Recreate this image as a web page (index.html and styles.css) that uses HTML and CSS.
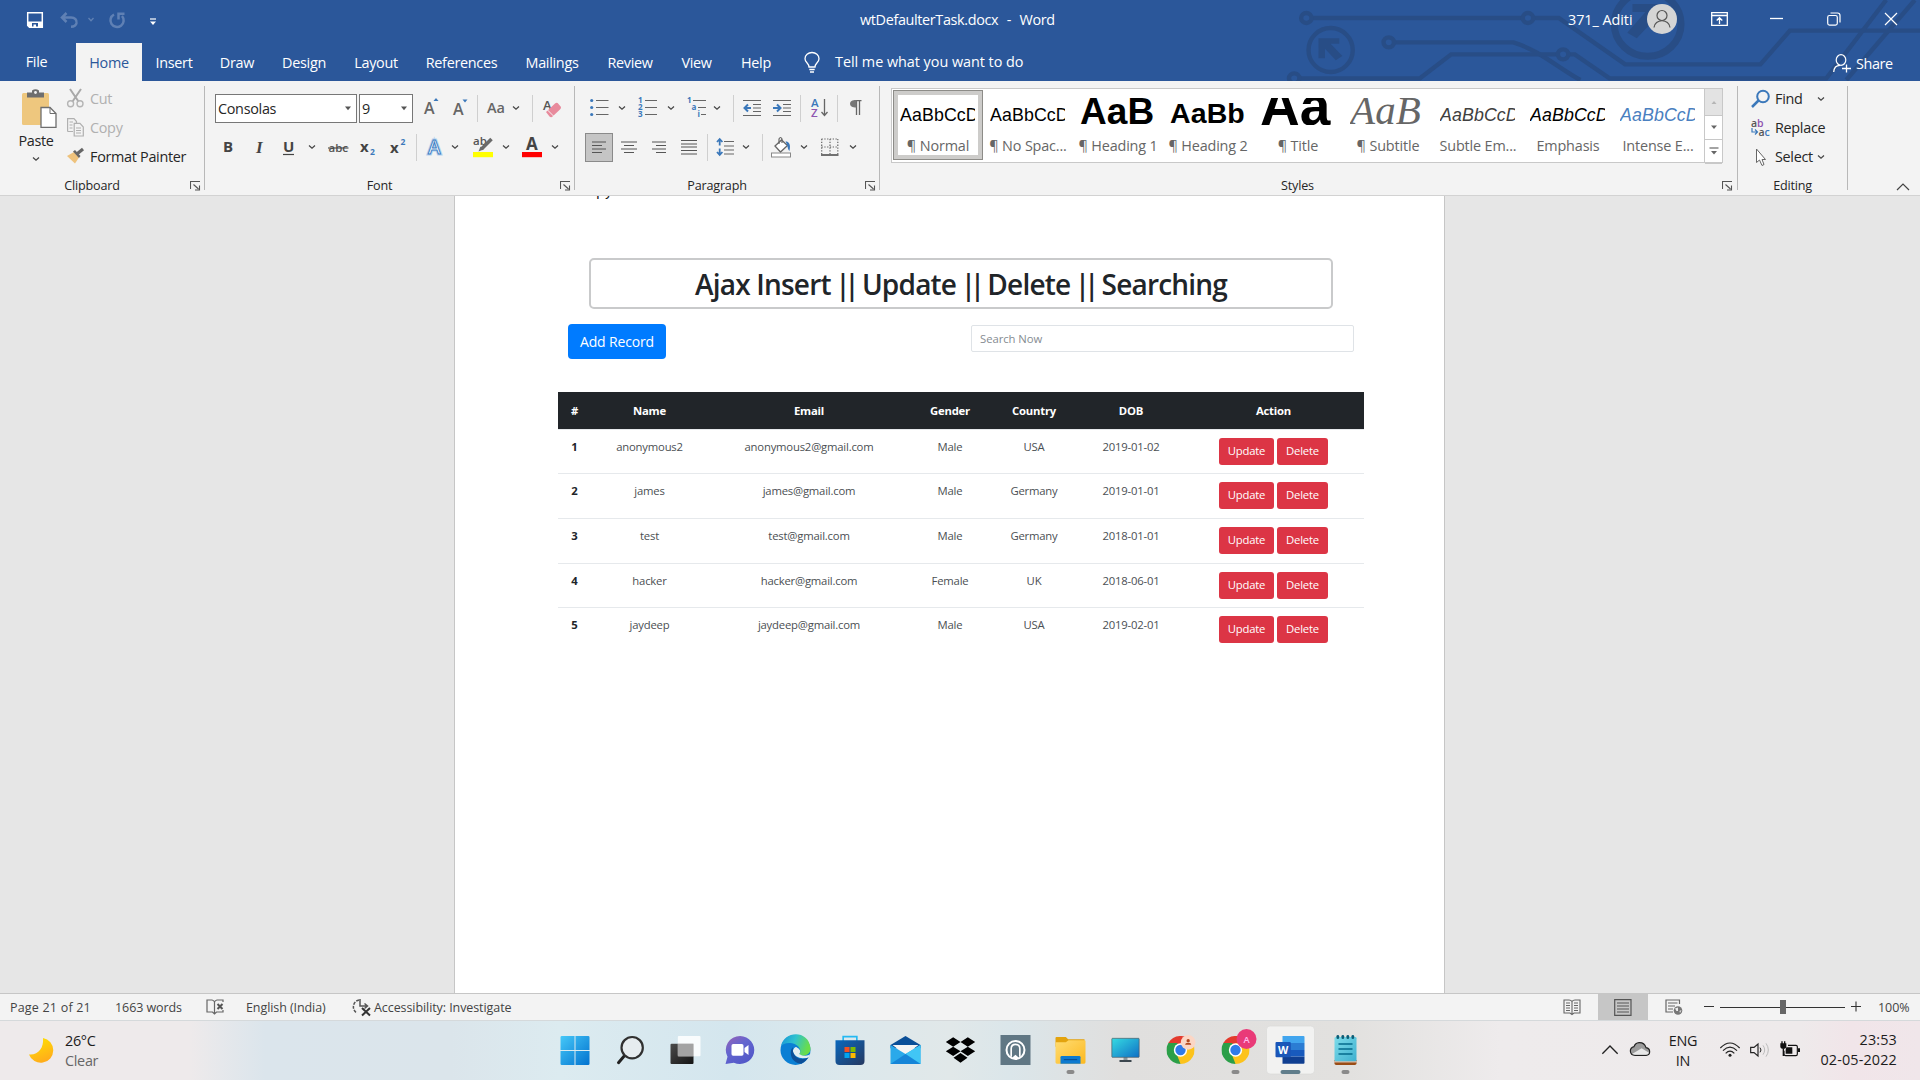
FILE: index.html
```html
<!DOCTYPE html>
<html lang="en">
<head>
<meta charset="utf-8">
<title>wtDefaulterTask.docx - Word</title>
<link rel="stylesheet" href="styles.css">
</head>
<body>
<svg class="defs" width="0" height="0">
  <symbol id="chev" viewBox="0 0 10 6"><path d="M2 1.5L5 4.3L8 1.5" fill="none" stroke="#444" stroke-width="1.2"/></symbol>
  <symbol id="launch" viewBox="0 0 11 10"><path d="M.5 8V.5H10M3.5 3.5L8.5 8M9.5 4.5V9H5" fill="none" stroke="#555" stroke-width="1.1"/></symbol>
  <linearGradient id="win" x1="0" y1="0" x2="1" y2="1"><stop offset="0" stop-color="#45c8f8"/><stop offset="1" stop-color="#0272cf"/></linearGradient>
  <linearGradient id="chat" x1="0" y1="0" x2=".7" y2="1"><stop offset="0" stop-color="#9b62b5"/><stop offset=".45" stop-color="#6465cf"/><stop offset="1" stop-color="#5157c8"/></linearGradient>
  <linearGradient id="edge1" x1="0" y1="0" x2="1" y2=".3"><stop offset="0" stop-color="#1793d8"/><stop offset=".5" stop-color="#2fc2cf"/><stop offset="1" stop-color="#69dd4b"/></linearGradient>
  <linearGradient id="store" x1="0" y1="0" x2="1" y2="1"><stop offset="0" stop-color="#0a68bd"/><stop offset="1" stop-color="#263860"/></linearGradient>
  <linearGradient id="fold" x1="0" y1="0" x2="1" y2="1"><stop offset="0" stop-color="#ffdc72"/><stop offset="1" stop-color="#fcb920"/></linearGradient>
  <linearGradient id="mon" x1="0" y1="0" x2="1" y2="1"><stop offset="0" stop-color="#35dbe2"/><stop offset="1" stop-color="#0f6fc5"/></linearGradient>
  <linearGradient id="moon" x1="0" y1="0" x2=".4" y2="1"><stop offset="0" stop-color="#ffe600"/><stop offset="1" stop-color="#ffae1a"/></linearGradient>
  <linearGradient id="dark" x1="0" y1="0" x2="1" y2="1"><stop offset="0" stop-color="#4b4b4b"/><stop offset="1" stop-color="#141414"/></linearGradient>
  <linearGradient id="note" x1="0" y1="0" x2="1" y2="1"><stop offset="0" stop-color="#7ddcea"/><stop offset="1" stop-color="#3fb0cf"/></linearGradient>
  <symbol id="chrome" viewBox="-42 -42 84 84">
    <path d="M0 0L-36.400-21A42 42 0 0 1 36.400-21Z" fill="#e33b2e"/>
    <path d="M0 0L36.400-21A42 42 0 0 1 0 42Z" fill="#fcc31c"/>
    <path d="M0 0L0 42A42 42 0 0 1-36.400-21Z" fill="#2b9f48"/>
    <path d="M0-20H37L20 8Z" fill="#fcc31c"/><path d="M-17.300 10L-36.400-21L-8-24Z" fill="#2b9f48"/><path d="M-36.400-21H37L0-42Z" fill="#e33b2e"/><path d="M17 10L0 42L-10 16Z" fill="#fcc31c"/>
    <circle r="20" fill="#fff"/><circle r="15.500" fill="#2f7bea"/>
  </symbol>
</svg>

<header class="titlebar">
  <svg class="circuit" viewBox="0 0 1568 243" preserveAspectRatio="none">
    <g fill="none" stroke="#284d86" stroke-width="4.400">
      <path d="M166 54H650M678 54H735L888 193H1200L1268 92H1568"/>
      <path d="M356 127H630C690 150 740 210 785 240"/>
      <path d="M138 235H415L487 163H733M758 163H772L852 235H1352L1490 0"/>
      <path d="M1398 240L1556 0"/>
      <ellipse cx="153" cy="54" rx="12" ry="15"/><ellipse cx="664" cy="54" rx="12" ry="15"/><ellipse cx="343" cy="127" rx="12" ry="15"/><ellipse cx="745" cy="163" rx="12" ry="15"/><ellipse cx="125" cy="235" rx="12" ry="15"/>
      <ellipse cx="209" cy="150" rx="51" ry="66"/>
      <ellipse cx="940" cy="72" rx="77" ry="97" stroke-width="7"/>
    </g>
    <path d="M181 115H229V131H209L236 168L221 181L196 146V175H181ZM905 12H975V70L953 62L915 115L893 98L935 36H905Z" fill="#284d86"/>
  </svg>
  <div class="title-row">
    <div class="quick">
      <svg width="16" height="16" viewBox="0 0 16 16"><path d="M.7.7H15.300V15.300H2.500L.7 13.500Z" fill="none" stroke="#fff" stroke-width="1.500"/><path d="M1 9.500H15V15H11V11H5V15H2L1 14Z" fill="#fff"/><path d="M6.500 12.500H9V15H6.500Z" fill="#fff"/></svg>
      <svg width="18" height="16" viewBox="0 0 18 16"><path d="M6.500 1L2 5.500L6.500 10M2 5.500H11C15 5.500 17 8 16.500 11C16 13.500 13.500 14.800 11 14.800" fill="none" stroke="#5f80b4" stroke-width="2.500"/></svg>
      <svg width="8" height="6" viewBox="0 0 8 6"><path d="M1.500 1L4 3.800L6.500 1" fill="none" stroke="#5f80b4" stroke-width="1.300"/></svg>
      <svg width="18" height="17" viewBox="0 0 18 17"><path d="M6 2.500A6.600 6.600 0 1 0 14 4M10.500 7.500V1.800H16.500" fill="none" stroke="#5f80b4" stroke-width="2.500"/></svg>
      <svg width="8" height="8" viewBox="0 0 8 8"><path d="M1 1H7" stroke="#fff" stroke-width="1.200"/><path d="M1 3.500H7L4 7Z" fill="#fff"/></svg>
    </div>
    <div class="doc-title"><span>wtDefaulterTask.docx</span><span>-</span><span>Word</span></div>
    <div class="account">
      <span class="user">371_ Aditi</span>
      <svg width="30" height="30" viewBox="0 0 30 30"><circle cx="15" cy="15" r="15" fill="#d5d5d5"/><circle cx="15" cy="11.500" r="5" fill="none" stroke="#555" stroke-width="1.200"/><path d="M7 23.500C7.500 14.500 22.500 14.500 23 23.500" fill="none" stroke="#555" stroke-width="1.200"/></svg>
      <svg width="17" height="14" viewBox="0 0 17 14"><path d="M.7.7H16.300V13.300H.7ZM.7 3.500H16.300M8.500 12V6M5.700 8.500L8.500 5.700L11.300 8.500" fill="none" stroke="#fff" stroke-width="1.300"/></svg>
      <svg width="14" height="14" viewBox="0 0 14 14"><path d="M0 6.500H13" stroke="#fff" stroke-width="1.300"/></svg>
      <svg width="14" height="14" viewBox="0 0 14 14"><rect x=".7" y="3.500" width="9.600" height="9.600" rx="1.800" fill="none" stroke="#fff" stroke-width="1.200"/><path d="M3.500 1H10.500Q13 1 13 3.500V10.500" fill="none" stroke="#fff" stroke-width="1.200"/></svg>
      <svg width="14" height="14" viewBox="0 0 14 14"><path d="M1 1L13 13M13 1L1 13" stroke="#fff" stroke-width="1.200"/></svg>
    </div>
  </div>
  <nav class="tabs">
    <span class="file">File</span><span class="active">Home</span><span>Insert</span><span>Draw</span><span>Design</span><span>Layout</span><span>References</span><span>Mailings</span><span>Review</span><span>View</span><span>Help</span>
    <div class="tell"><svg width="16" height="21" viewBox="0 0 16 21"><path d="M5 15C5 11 1 10.500 1 6.800A7 6.300 0 0 1 15 6.800C15 10.500 11 11 11 15ZM5.300 17.500H10.700M6 20H10" fill="none" stroke="#fff" stroke-width="1.300"/></svg><span>Tell me what you want to do</span></div>
    <div class="share"><svg width="18" height="19" viewBox="0 0 18 19"><ellipse cx="8" cy="6" rx="4.800" ry="5.300" fill="none" stroke="#fff" stroke-width="1.200"/><path d="M.7 18C1 13 4 11.300 7 11.300M13.500 10.500V18.500M9 14.500H18" fill="none" stroke="#fff" stroke-width="1.300"/></svg><span>Share</span></div>
  </nav>
</header>

<section class="ribbon">
  <div class="group clipboard">
    <div class="clip-body">
      <div class="paste">
        <svg width="36" height="39" viewBox="0 0 36 39"><rect x="1" y="4" width="27" height="32" rx="1.500" fill="#eec77e"/><path d="M6 8.500V3.500H11V1.500Q14.500-1 18 1.500V3.500H23V8.500Z" fill="#6e6e6e"/><circle cx="14.500" cy="3.500" r="1.400" fill="#f3f3f3"/><path d="M20 18.500H29L35 24.500V38.300H20Z" fill="#fff" stroke="#6e6e6e" stroke-width="1.300"/><path d="M29 18.500V24.500H35" fill="none" stroke="#6e6e6e"/></svg>
        <span>Paste</span>
        <svg class="chev" width="10" height="6"><use href="#chev"/></svg>
      </div>
      <div class="clip-list">
        <div class="off"><svg width="17" height="19" viewBox="0 0 17 19"><path d="M3 0L11.500 12.500M14 0L5.500 12.500" stroke="#a9a9a9" stroke-width="2"/><circle cx="3.600" cy="14.800" r="3" fill="none" stroke="#b5b5b5" stroke-width="1.400"/><circle cx="13" cy="14.800" r="3" fill="none" stroke="#b5b5b5" stroke-width="1.400"/></svg>Cut</div>
        <div class="off"><svg width="17" height="19" viewBox="0 0 17 19"><path d="M.6 13.500V.7H7L9.500 3.500V5M.6 13.500H6M7.200 5.300H13L16.300 9V18H7.200ZM2.500 4H6M2.500 7H5.500M2.500 10H5.500M9 10H14M9 12.500H14M9 15H14" fill="none" stroke="#b0b0b0" stroke-width="1.200"/></svg>Copy</div>
        <div><svg width="17" height="19" viewBox="0 0 17 19"><path d="M0 9L7 5L12 10.500L8 16.500Z" fill="#eec27c"/><path d="M6 4.500L8 3L13.500 9L12 11Z" fill="#666"/><path d="M10.500 6.500L16 2" stroke="#666" stroke-width="3.200"/></svg>Format Painter</div>
      </div>
    </div>
    <div class="label"><span>Clipboard</span><svg width="11" height="10"><use href="#launch"/></svg></div>
  </div>

  <div class="group font">
    <div class="row font-1">
      <div class="combo">Consolas<svg width="8" height="5" viewBox="0 0 8 5"><path d="M1 .5H7L4 4.300Z" fill="#555"/></svg></div>
      <div class="combo size">9<svg width="8" height="5" viewBox="0 0 8 5"><path d="M1 .5H7L4 4.300Z" fill="#555"/></svg></div>
      <svg width="16" height="20" viewBox="0 0 16 20"><text x="0" y="16" class="ic-a">A</text><path d="M9.500 3L12 0L14.500 3Z" fill="#3b78ba"/></svg>
      <svg width="16" height="20" viewBox="0 0 16 20"><text x="0" y="17" class="ic-a">A</text><path d="M9.500 1.500L12 4.500L14.500 1.500Z" fill="#3b78ba"/></svg>
      <i class="sep"></i>
      <svg width="20" height="20" viewBox="0 0 20 20"><text x="0" y="15" class="ic-aa">Aa</text></svg>
      <svg width="10" height="6"><use href="#chev"/></svg>
      <i class="sep"></i>
      <svg width="20" height="20" viewBox="0 0 20 20"><text x="0" y="11.500" class="ic-sm">A</text><path d="M3 14L12 5.500Q14 4 15.500 6L18 9Q18 10.500 17 11.500L9 19Q7.500 19.500 6.500 18.500Z" fill="#e88a9c"/><path d="M4.500 12L10.500 18" stroke="#f3f3f3" stroke-width="1"/></svg>
    </div>
    <div class="row font-2">
      <svg width="16" height="20" viewBox="0 0 16 20"><text x="3" y="15" class="ic-b">B</text></svg>
      <svg width="16" height="20" viewBox="0 0 16 20"><text x="4" y="15.500" class="ic-i">I</text></svg>
      <svg width="16" height="20" viewBox="0 0 16 20"><text x="1" y="14.500" class="ic-b">U</text><path d="M1 17.500H12" stroke="#444" stroke-width="1.200"/></svg>
      <svg width="10" height="6"><use href="#chev"/></svg>
      <svg width="23" height="20" viewBox="0 0 23 20"><text x="1.500" y="15" class="ic-abc">abc</text><path d="M1 11H21.500" stroke="#444" stroke-width="1.100"/></svg>
      <svg width="18" height="20" viewBox="0 0 18 20"><text x="0" y="15" class="ic-b">x</text><text x="10" y="18" class="ic-n">2</text></svg>
      <svg width="18" height="20" viewBox="0 0 18 20"><text x="1" y="15.500" class="ic-b">x</text><text x="11.500" y="8" class="ic-n">2</text></svg>
      <i class="sep"></i>
      <svg width="18" height="22" viewBox="0 0 18 22"><text x="2" y="18" class="ic-fx glow">A</text><text x="2" y="18" class="ic-fx">A</text></svg>
      <svg width="10" height="6"><use href="#chev"/></svg>
      <svg width="22" height="22" viewBox="0 0 22 22"><text x="1" y="8.500" class="ic-hl">ab</text><path d="M19.500 3L9.500 13" stroke="#6a6a6a" stroke-width="3.500"/><path d="M6.500 15.500L8.500 10.500L11.500 13.500Z" fill="#6a6a6a"/><rect x="1" y="16" width="20" height="5.200" fill="#ff0"/></svg>
      <svg width="10" height="6"><use href="#chev"/></svg>
      <svg width="22" height="22" viewBox="0 0 22 22"><text x="5" y="14" class="ic-fc">A</text><rect x="1" y="16" width="20" height="5.200" fill="#f00"/></svg>
      <svg width="10" height="6"><use href="#chev"/></svg>
    </div>
    <div class="label"><span>Font</span><svg width="11" height="10"><use href="#launch"/></svg></div>
  </div>

  <div class="group para">
    <div class="row para-1">
      <svg width="19" height="20" viewBox="0 0 19 20"><path d="M6 2.500H18.500M6 9.500H18.500M6 16.500H18.500" stroke="#666" stroke-width="1.200"/><g fill="#3b78ba"><circle cx="1.700" cy="2.500" r="1.600"/><circle cx="1.700" cy="9.500" r="1.600"/><circle cx="1.700" cy="16.500" r="1.600"/></g></svg>
      <svg width="10" height="6"><use href="#chev"/></svg>
      <svg width="20" height="20" viewBox="0 0 20 20"><path d="M7 2.500H19M7 9.500H19M7 16.500H19" stroke="#666" stroke-width="1.200"/><g class="ic-num"><text x="0" y="5">1</text><text x="0" y="12">2</text><text x="0" y="19">3</text></g></svg>
      <svg width="10" height="6"><use href="#chev"/></svg>
      <svg width="21" height="20" viewBox="0 0 21 20"><path d="M7 2.500H20M12 9.500H20M15 16.500H20" stroke="#666" stroke-width="1.200"/><g class="ic-num"><text x="1" y="5">1</text><text x="5.500" y="12">a</text><text x="11.500" y="19">i</text></g></svg>
      <svg width="10" height="6"><use href="#chev"/></svg>
      <i class="sep"></i>
      <svg width="19" height="20" viewBox="0 0 19 20"><path d="M0 2.500H18M10 6.500H18M10 10H18M10 13.500H18M0 17.500H18" stroke="#666" stroke-width="1.200"/><path d="M8 10H2M5 6.500L1.500 10L5 13.500" fill="none" stroke="#3b78ba" stroke-width="2"/></svg>
      <svg width="19" height="20" viewBox="0 0 19 20"><path d="M0 2.500H18M10 6.500H18M10 10H18M10 13.500H18M0 17.500H18" stroke="#666" stroke-width="1.200"/><path d="M0 10H6.500M4 6.500L7.500 10L4 13.500" fill="none" stroke="#3b78ba" stroke-width="2"/></svg>
      <i class="sep"></i>
      <svg width="20" height="20" viewBox="0 0 20 20"><text x="1" y="9" class="ic-az">A</text><text x="1" y="19" class="ic-az z">Z</text><path d="M14.500 1V17M11.500 14L14.500 17.500L17.500 14" fill="none" stroke="#666" stroke-width="1.300"/></svg>
      <i class="sep"></i>
      <svg width="14" height="20" viewBox="0 0 14 20"><path d="M12.500 2.700H5.500M7.500 2.500V17M10.500 2.500V17" stroke="#666" stroke-width="1.300"/><path d="M7.500 2V9.500C3 9.500 1 8 1 5.700C1 3.500 3 2 7.500 2Z" fill="#777"/></svg>
    </div>
    <div class="row para-2">
      <div class="pressed"><svg width="16" height="16" viewBox="0 0 16 16"><path d="M1 3H15M1 6.500H11M1 10H15M1 13.500H11" stroke="#555" stroke-width="1.200"/></svg></div>
      <svg width="16" height="16" viewBox="0 0 16 16"><path d="M0 3H16M3 6.500H13M0 10H16M3 13.500H13" stroke="#555" stroke-width="1.200"/></svg>
      <svg width="16" height="16" viewBox="0 0 16 16"><path d="M1 3H15M5 6.500H15M1 10H15M5 13.500H15" stroke="#555" stroke-width="1.200"/></svg>
      <svg width="16" height="16" viewBox="0 0 16 16"><path d="M0 1.500H16M0 5H16M0 8H16M0 11.500H16M0 15H16" stroke="#555" stroke-width="1.200"/></svg>
      <i class="sep"></i>
      <svg width="19" height="20" viewBox="0 0 19 20"><path d="M8 4.500H18M8 9H18M8 13H18M8 17H18" stroke="#666" stroke-width="1.200"/><path d="M3.700 2V8.500M1 5L3.700 2L6.400 5M3.700 11.500V18M1 15L3.700 18L6.400 15" fill="none" stroke="#3b78ba" stroke-width="1.800"/></svg>
      <svg width="10" height="6"><use href="#chev"/></svg>
      <i class="sep"></i>
      <svg width="22" height="22" viewBox="0 0 22 22"><path d="M5 10L11.500 4L17.500 9.500L10.500 16Z" fill="#fff" stroke="#666" stroke-width="1.300"/><path d="M9 8V3Q10.500 0 12 3V7" fill="none" stroke="#666" stroke-width="1.200"/><path d="M15.500 5.500C19 5.500 21 8 19.500 15C17.500 13.500 18 9.500 15.500 5.500Z" fill="#3b78ba"/><rect x="1.500" y="17" width="19" height="4" fill="#fff" stroke="#888"/></svg>
      <svg width="10" height="6"><use href="#chev"/></svg>
      <svg width="18" height="18" viewBox="0 0 18 18"><path d="M.5 1H17M.5 9H17M.7 1V16M9 1V16M16.800 1V16" fill="none" stroke="#666" stroke-width="1.200" stroke-dasharray="1.300 1.500"/><path d="M0 17H17.500" stroke="#444" stroke-width="1.500"/></svg>
      <svg width="10" height="6"><use href="#chev"/></svg>
    </div>
    <div class="label"><span>Paragraph</span><svg width="11" height="10"><use href="#launch"/></svg></div>
  </div>

  <div class="group styles">
    <div class="gallery">
      <div class="style on"><div class="pv">AaBbCcDd</div><div class="nm">¶ Normal</div></div>
      <div class="style"><div class="pv">AaBbCcDd</div><div class="nm">¶ No Spac...</div></div>
      <div class="style"><div class="pv h1">AaB</div><div class="nm">¶ Heading 1</div></div>
      <div class="style"><div class="pv h2">AaBb</div><div class="nm">¶ Heading 2</div></div>
      <div class="style"><div class="pv ti">Aa</div><div class="nm">¶ Title</div></div>
      <div class="style"><div class="pv su">AaB</div><div class="nm">¶ Subtitle</div></div>
      <div class="style"><div class="pv em subtle">AaBbCcDd</div><div class="nm">Subtle Em...</div></div>
      <div class="style"><div class="pv em">AaBbCcDd</div><div class="nm">Emphasis</div></div>
      <div class="style"><div class="pv em intense">AaBbCcDd</div><div class="nm">Intense E...</div></div>
      <div class="scroller">
        <span class="dim"><svg width="8" height="5" viewBox="0 0 8 5"><path d="M1.500 4H6.500L4 1Z" fill="#b5b5b5"/></svg></span>
        <span><svg width="8" height="5" viewBox="0 0 8 5"><path d="M1 .5H7L4 4Z" fill="#666"/></svg></span>
        <span><svg width="10" height="9" viewBox="0 0 10 9"><path d="M.5 1H9.500" stroke="#666" stroke-width="1.200"/><path d="M2 4H8L5 7.500Z" fill="#666"/></svg></span>
      </div>
    </div>
    <div class="label"><span>Styles</span><svg width="11" height="10"><use href="#launch"/></svg></div>
  </div>

  <div class="group editing">
    <div class="edit-list">
      <div><svg width="20" height="20" viewBox="0 0 20 20"><circle cx="12" cy="7.500" r="5.800" fill="none" stroke="#3b78ba" stroke-width="2"/><path d="M7.500 11.500L1 18" stroke="#3b78ba" stroke-width="2.500"/></svg>Find<svg class="c1" width="10" height="6"><use href="#chev"/></svg></div>
      <div><svg width="20" height="20" viewBox="0 0 20 20"><text x="0" y="8.500" class="ic-rep">a<tspan fill="#8e55b0">b</tspan></text><text x="7.500" y="18" class="ic-rep">a<tspan fill="#3b78ba">c</tspan></text><path d="M1 10V14H6M4 11.500L6.500 14L4 16.500" fill="none" stroke="#3b78ba" stroke-width="1.200"/></svg>Replace</div>
      <div><svg width="20" height="20" viewBox="0 0 20 20"><path d="M5.500 2V15.500L8.500 13L11 18.500L13 17.500L11 12.500H14.500Z" fill="#fff" stroke="#666"/></svg>Select<svg class="c2" width="10" height="6"><use href="#chev"/></svg></div>
    </div>
    <div class="label"><span>Editing</span></div>
  </div>
  <div class="collapse"><svg width="14" height="8" viewBox="0 0 14 8"><path d="M1 7L7 1L13 7" fill="none" stroke="#444" stroke-width="1.200"/></svg></div>
</section>

<main class="canvas">
  <article class="page">
    <div class="cut-line">py</div>
    <h1 class="app-title">Ajax Insert <i>||</i> Update <i>||</i> Delete <i>||</i> Searching</h1>
    <div class="tools"><span class="add">Add Record</span><span class="search">Search Now</span></div>
    <table class="records">
      <colgroup><col class="k1"><col class="k2"><col class="k3"><col class="k4"><col class="k5"><col class="k6"><col class="k7"></colgroup>
      <thead><tr><th>#</th><th>Name</th><th>Email</th><th>Gender</th><th>Country</th><th>DOB</th><th>Action</th></tr></thead>
      <tbody>
        <tr><th>1</th><td>anonymous2</td><td>anonymous2@gmail.com</td><td>Male</td><td>USA</td><td>2019-01-02</td><td><div class="acts"><span>Update</span><span>Delete</span></div></td></tr>
        <tr><th>2</th><td>james</td><td>james@gmail.com</td><td>Male</td><td>Germany</td><td>2019-01-01</td><td><div class="acts"><span>Update</span><span>Delete</span></div></td></tr>
        <tr><th>3</th><td>test</td><td>test@gmail.com</td><td>Male</td><td>Germany</td><td>2018-01-01</td><td><div class="acts"><span>Update</span><span>Delete</span></div></td></tr>
        <tr><th>4</th><td>hacker</td><td>hacker@gmail.com</td><td>Female</td><td>UK</td><td>2018-06-01</td><td><div class="acts"><span>Update</span><span>Delete</span></div></td></tr>
        <tr><th>5</th><td>jaydeep</td><td>jaydeep@gmail.com</td><td>Male</td><td>USA</td><td>2019-02-01</td><td><div class="acts"><span>Update</span><span>Delete</span></div></td></tr>
      </tbody>
    </table>
  </article>
</main>

<footer class="status">
  <div class="st-left">
    <span class="pages">Page 21 of 21</span><span>1663 words</span>
    <svg width="18" height="16" viewBox="0 0 18 16"><path d="M8.500 3Q8 1.500 6 1H1V13H6.500L8.500 15L10.500 13H17V11M8.500 3V14M8.500 3Q9 1.500 11 1H17V3" fill="none" stroke="#666" stroke-width="1.200"/><path d="M11.500 5L16.500 10M16.500 5L11.500 10" stroke="#555" stroke-width="2"/></svg>
    <span>English (India)</span>
    <svg width="20" height="19" viewBox="0 0 20 19"><path d="M7 2A7 7 0 0 0 5 15" fill="none" stroke="#555" stroke-width="1.500" stroke-dasharray="3 1.200"/><path d="M8 1V8H15M12.500 5.500L15.500 8L12.500 10.500" fill="none" stroke="#555" stroke-width="1.500"/><path d="M10 10L18 17.500M18 10L10 17.500" stroke="#333" stroke-width="2"/></svg>
    <span>Accessibility: Investigate</span>
  </div>
  <div class="st-right">
    <svg width="18" height="16" viewBox="0 0 18 16"><path d="M9 2.500Q8 1 6 1H1V14H7L9 15.500L11 14H17V1H12Q10 1 9 2.500V15M3 4H7M3 6.500H7M3 9H7M3 11.500H7M11 4H15M11 6.500H15M11 9H15M11 11.500H15" fill="none" stroke="#666" stroke-width="1.100"/></svg>
    <div class="view-on"><svg width="18" height="17" viewBox="0 0 18 17"><path d="M.7.700H17V16.300H.7ZM3 4H15M3 7H15M3 10H15M3 13H15" fill="none" stroke="#555" stroke-width="1.200"/></svg></div>
    <svg width="18" height="17" viewBox="0 0 18 17"><path d="M14.500 5V1H1V13H8M3 4H12.500M3 7H10M3 10H8" fill="none" stroke="#666" stroke-width="1.200"/><circle cx="13" cy="11.500" r="4.300" fill="#777"/><path d="M10 9.500L13 8.500L13 12L11.500 12ZM14.500 12L16.500 11L15 14Z" fill="#eee"/></svg>
    <svg class="zoom" width="158" height="16" viewBox="0 0 158 16"><path d="M0 7.500H10M147 7.500H157M152 2.500V12.500" stroke="#333" stroke-width="1.100"/><path d="M16 8.500H141" stroke="#333" stroke-width="1.100"/><rect x="76" y="1" width="6" height="14" fill="#666"/></svg>
    <span>100%</span>
  </div>
</footer>

<footer class="taskbar">
  <div class="weather">
    <svg width="26" height="26" viewBox="0 0 26 26"><path d="M16 1A12.500 12.500 0 1 1 2 17.500C11 18.500 17 11 16 1Z" fill="url(#moon)"/></svg>
    <div><b>26°C</b><span>Clear</span></div>
  </div>
  <div class="apps">
    <svg viewBox="25.5 30 165 180"><path d="M67 78H105V120H63V82Q63 78 67 78ZM108 78H146Q150 78 150 82V120H108ZM63 123H105V165H67Q63 165 63 161ZM108 123H150V161Q150 165 146 165H108Z" fill="url(#win)"/></svg>
    <svg viewBox="190.5 30 165 180"><path d="M256 136L237 158" stroke="#222" stroke-width="9" stroke-linecap="round"/><circle cx="278" cy="113" r="32" fill="#e6ecef" stroke="#303030" stroke-width="6.500"/></svg>
    <svg viewBox="355.5 30 165 180"><rect x="393" y="101" width="69" height="61" rx="3" fill="url(#dark)"/><rect x="415" y="78" width="68" height="61" rx="3" fill="#fff" opacity=".85"/><rect x="415" y="101" width="47" height="38" fill="#a3a3a3"/></svg>
    <svg viewBox="520.5 30 165 180"><path d="M602 78A43 42 0 1 1 583 158L558 162L564 140A43 42 0 0 1 602 78Z" fill="url(#chat)"/><rect x="576" y="102" width="36" height="35" rx="5" fill="#fff"/><path d="M615 114L627 105V135L615 126Z" fill="#fff"/></svg>
    <svg viewBox="685.5 30 165 180"><circle cx="768" cy="120" r="45" fill="#0b7fd4"/><path d="M725 108C733 62 808 58 813 115C814 140 780 142 779 132C788 125 780 104 758 100C740 97 729 103 725 108Z" fill="url(#edge1)"/><path d="M779 132C790 140 808 138 811 133Q812 137 807 143C800 146 768 148 760 125C760 118 766 111 770 111C784 118 784 126 779 132Z" fill="#e2eef2"/><path d="M760 112C748 122 752 160 786 161Q798 156 807 142C785 155 757 143 760 112Z" fill="#0d4f98"/></svg>
    <svg viewBox="850.5 30 165 180"><path d="M911 96V80H952V96" fill="none" stroke="#25b9f2" stroke-width="5"/><path d="M888 91H975V153Q975 165 963 165H900Q888 165 888 153Z" fill="url(#store)"/><path d="M915 111H930V126H915Z" fill="#f25022"/><path d="M933 111H948V126H933Z" fill="#7fba00"/><path d="M915 129H930V144H915Z" fill="#00a4ef"/><path d="M933 129H948V144H933Z" fill="#ffb900"/></svg>
    <svg viewBox="1015.5 30 165 180"><path d="M1053 105L1098 78L1143 105V115H1053Z" fill="#0a4f98"/><path d="M1059 105H1137L1098 135Z" fill="#f4f4f4"/><path d="M1053 105L1098 132L1143 105V162H1053Z" fill="#2aa9ea"/><path d="M1098 132L1143 105V162Z" fill="#41c6f5"/><path d="M1053 162L1098 132L1143 162Z" fill="#1585d8"/></svg>
    <svg viewBox="1180.5 30 165 180"><path d="M1241 82L1263 96L1241 110L1219 96ZM1285 82L1307 96L1285 110L1263 96ZM1241 110L1263 124L1241 138L1219 124ZM1285 110L1307 124L1285 138L1263 124ZM1263 129L1284 143L1263 158L1242 143Z" fill="#000"/></svg>
    <svg viewBox="-34.500 30 165 180"><rect x="3" y="75" width="90" height="90" fill="#607784"/><circle cx="48" cy="120" r="27" fill="none" stroke="#fff" stroke-width="6"/><path d="M35 140V116Q35 103 48 103Q61 103 61 116V140" fill="none" stroke="#fff" stroke-width="5"/><path d="M36 145L48 134L60 145Z" fill="#fff"/></svg>
    <svg viewBox="130.500 30 165 180"><path d="M168 84Q168 81 171 81H199L206 88H255V110H168Z" fill="#e3a30e"/><path d="M168 97H199L207 91H255Q258 91 258 94V157Q258 161 254 161H172Q168 161 168 157Z" fill="url(#fold)"/><path d="M183 161V142Q183 138 187 138H239Q243 138 243 142V161Z" fill="#0c7ad0"/><path d="M193 149H233" stroke="#07498e" stroke-width="3"/><rect class="run" x="201" y="180" width="24" height="12" rx="6"/></svg>
    <svg viewBox="295.500 30 165 180"><path d="M372 140H384V151H372Z" fill="#8a969c"/><path d="M360 150H396V156H360Z" fill="#3c474e"/><rect x="337" y="85" width="82" height="57" rx="2" fill="url(#mon)" stroke="#4d5960" stroke-width="2"/></svg>
    <svg viewBox="460.500 30 165 180"><use href="#chrome" x="501" y="78" width="84" height="84"/><circle cx="566" cy="97" r="22" fill="#fbd6c5"/><circle cx="566" cy="92" r="5" fill="#b3471c"/><path d="M557 104Q557 98 566 98T575 104Z" fill="#b3471c"/></svg>
    <svg viewBox="625.500 30 165 180"><use href="#chrome" x="666" y="78" width="84" height="84"/><circle cx="741" cy="87" r="30" fill="#e93a78"/><text x="741" y="98" text-anchor="middle" class="badge">A</text><rect class="run" x="696" y="180" width="24" height="12" rx="6"/></svg>
    <svg viewBox="790.500 30 165 180"><rect x="801" y="48" width="144" height="144" rx="11" fill="#f2f2f1" stroke="#d9d9d8" stroke-width="2"/><path d="M849 78H912Q915 78 915 81V99H849Z" fill="#41a5ee"/><path d="M849 99H915V120H849Z" fill="#2b7cd3"/><path d="M849 120H915V140H849Z" fill="#185abd"/><path d="M849 140H915V158Q915 161 912 161H849Z" fill="#103f91"/><rect x="828" y="96" width="46" height="46" rx="3" fill="#1a56b8"/><text x="851" y="131" text-anchor="middle" class="wlogo">W</text><rect x="843" y="180" width="60" height="12" rx="6" fill="#607d8b"/></svg>
    <svg viewBox="955.500 30 165 180"><path d="M1005 150H1071V160Q1071 165 1066 165H1010Q1005 165 1005 160Z" fill="#9a4d16"/><rect x="1005" y="154" width="66" height="3" fill="#f4f4f4"/><rect x="1005" y="81" width="66" height="73" rx="4" fill="url(#note)"/><path d="M1017 102H1059M1017 117H1059M1017 132H1059" stroke="#046b8c" stroke-width="5"/><g fill="#0c5d76"><rect x="1011" y="75" width="8" height="12" rx="4"/><rect x="1026" y="75" width="8" height="12" rx="4"/><rect x="1041" y="75" width="8" height="12" rx="4"/><rect x="1056" y="75" width="8" height="12" rx="4"/></g><rect class="run" x="1026" y="180" width="24" height="12" rx="6"/></svg>
  </div>
  <div class="tray">
    <svg width="18" height="20" viewBox="243 180 54 60"><path d="M247 221L270 198L293 221" fill="none" stroke="#222" stroke-width="4"/></svg>
    <svg width="22" height="20" viewBox="327 180 66 60"><path d="M345 226H378Q389 225 389 215Q389 205 378 203Q373 187 357 188Q346 189 342 200Q331 203 331 213Q332 226 345 226Z" fill="#9b9b9b" stroke="#222" stroke-width="3.500"/><path d="M336 222L365 205L387 218Q384 224 378 224H345Z" fill="#e8e8e8"/></svg>
    <div class="lang"><span>ENG</span><span>IN</span></div>
    <svg width="22" height="20" viewBox="597 180 66 60"><g fill="none" stroke="#222" stroke-width="3.500"><path d="M601 204Q630 174 659 204M609 212Q630 191 651 212M617 220Q630 207 643 220"/></g><circle cx="630" cy="226" r="4.500" fill="#222"/></svg>
    <svg width="22" height="20" viewBox="687 180 66 60"><path d="M692 202H702L714 192V228L702 218H692Z" fill="none" stroke="#222" stroke-width="3.500"/><path d="M720 203Q726 210 720 217" fill="none" stroke="#222" stroke-width="3"/><path d="M729 196Q739 210 729 224M738 190Q752 210 738 230" fill="none" stroke="#bbb" stroke-width="3"/></svg>
    <svg width="22" height="20" viewBox="777 180 66 60"><path d="M804 196H828Q832 196 832 200V222Q832 227 828 227H797Q792 227 792 222V212" fill="none" stroke="#111" stroke-width="3.500"/><path d="M799 202H817V221H797V210Z" fill="#111"/><path d="M834 205H840V216H834ZM781 190H799V202Q797 207 790 207Q783 207 781 202ZM784 184H788V192H784ZM792 184H796V192H792ZM788 205H792V228H788Z" fill="#111"/></svg>
    <div class="clock"><span>23:53</span><span>02-05-2022</span></div>
  </div>
</footer>
</body>
</html>
```
FILE: styles.css
```css
* { box-sizing: border-box; }
body { margin: 0; width: 1920px; height: 1080px; overflow: hidden; display: flex; flex-direction: column; font-family: "Open Sans", "Noto Sans", sans-serif; font-size: 14.4px; color: #262626; background: #e6e6e6; }
svg { display: block; flex: none; overflow: visible; }
.defs { position: absolute; }

/* title bar and tabs */
.titlebar { height: 81px; background: #2b579a; color: #fff; position: relative; flex: none; }
.circuit { position: absolute; left: 1240px; top: 0; width: 680px; height: 81px; overflow: hidden; }
.circuit * { vector-effect: non-scaling-stroke; }
.title-row { position: relative; height: 43px; display: grid; grid-template-columns: 860px 1fr 352px; align-items: start; }
.quick { display: flex; align-items: center; height: 40px; padding-left: 27px; }
.quick svg:nth-child(2) { margin-left: 17px; }
.quick svg:nth-child(3) { margin-left: 9px; }
.quick svg:nth-child(4) { margin-left: 13px; }
.quick svg:nth-child(5) { margin: 4px 0 0 23px; }
.doc-title { display: flex; gap: 8.500px; line-height: 39px; font-size: 14.4px; letter-spacing: -.35px; white-space: nowrap; }
.account { display: flex; align-items: center; height: 38px; }
.user { width: 79px; letter-spacing: -.05px; white-space: nowrap; }
.account svg:nth-of-type(2) { margin-left: 34px; }
.account svg:nth-of-type(3) { margin-left: 42px; }
.account svg:nth-of-type(4) { margin-left: 43px; }
.account svg:nth-of-type(5) { margin-left: 43px; }
.tabs { position: relative; height: 38px; display: grid; grid-template-columns: 76px 66px 64px 62px 72px 72px 99px 82px 74px 59px 60px 1047px 87px; line-height: 39px; letter-spacing: -.3px; white-space: nowrap; }
.tabs > span { text-align: center; }
.tabs .file { padding-right: 3px; line-height: 37px; }
.tabs .active { background: #f3f3f3; color: #2b579a; height: 38px; }
.tell { display: flex; align-items: flex-start; gap: 15px; padding-left: 18px; letter-spacing: -.03px; }
.tell svg { margin-top: 9px; }
.tell span { line-height: 37px; }
.share { display: flex; align-items: flex-start; gap: 5px; letter-spacing: -.4px; }
.share svg { margin-top: 11px; }
.share span { line-height: 41px; }

/* ribbon */
.ribbon { height: 115px; flex: none; display: flex; background: #f3f3f3; border-bottom: 1px solid #d2d2d2; letter-spacing: -.3px; }
.group { position: relative; height: 114px; display: flex; flex-direction: column; }
.group::after { content: ""; position: absolute; right: 0; top: 5px; height: 104px; width: 1px; background: #b8b8b8; }
.clipboard { width: 205px; }
.font { width: 370px; padding-top: 12px; }
.para { width: 305px; padding-top: 12px; }
.styles { width: 858px; padding: 7px 0 0 11px; }
.editing { width: 110px; }
.label { margin-top: auto; height: 17px; margin-bottom: 1px; display: flex; align-items: center; font-size: 12.600px; letter-spacing: -.2px; }
.label span { flex: 1; text-align: center; line-height: 17px; }
.label svg { margin: 0 4px 0 6px; }
.styles .label { margin-left: -12px; }
.styles .label svg { margin-right: 5px; }
.editing .label { padding-right: 1px; }
.clip-body { display: flex; }
.paste { width: 62px; padding: 8px 0 0 10px; display: flex; flex-direction: column; align-items: center; }
.paste > svg:first-child { margin-left: 6px; }
.paste span { line-height: 24px; margin-top: 1px; }
.paste .chev { margin-top: 3px; }
.clip-list { padding: 3px 0 0 5px; }
.clip-list div { display: flex; align-items: center; gap: 6px; height: 29px; white-space: nowrap; line-height: 29px; }
.clip-list .off { color: #b0b0b0; }
.row { display: grid; height: 30px; align-items: center; justify-items: start; }
.row + .row { margin-top: 9px; }
.sep { width: 1px; height: 27px; background: #cfcfcf; }
.font-1 { grid-template-columns: 144px 65px 29px 24px 10px 24px 21px 11px 22px; padding-left: 10px; }
.font-2 { grid-template-columns: 32px 30px 25px 20px 33px 29px 27px 10px 24px 22px 29px 20px 29px 10px; padding-left: 15px; }
.para-1 { grid-template-columns: 27px 21px 28px 20px 26px 21px 10px 30px 27px 10px 27px 12px 14px; padding-left: 15px; }
.para-2 { grid-template-columns: 36px 30px 30px 26px 9px 25px 21px 8px 29px 22px 27px 10px; padding-left: 10px; }
.combo { width: 142px; height: 29px; background: #fff; border: 1px solid #777; display: flex; align-items: center; justify-content: space-between; padding: 0 4px 0 2px; }
.combo.size { width: 54px; }
.pressed { width: 28px; height: 29px; background: #c5c5c5; border: 1px solid #8a8a8a; display: grid; place-items: center; }
.row text, .edit-list text { letter-spacing: 0; }
.ic-a { font: 600 16px "Open Sans", sans-serif; fill: #666; }
.ic-aa { font: 600 14.500px "Open Sans", sans-serif; fill: #666; }
.ic-sm { font: 600 13px "Open Sans", sans-serif; fill: #555; }
.ic-b { font: bold 15px "Open Sans", sans-serif; fill: #444; }
.ic-i { font: italic bold 17px "Liberation Serif", serif; fill: #444; }
.ic-abc { font: 600 11.500px "Open Sans", sans-serif; fill: #555; }
.ic-n { font: bold 8.500px "Open Sans", sans-serif; fill: #3b78ba; }
.ic-fx { font: 600 19px "Open Sans", sans-serif; fill: #fff; stroke: #3f7fc4; stroke-width: 1px; }
.ic-fx.glow { stroke: #b9d3ee; stroke-width: 3px; }
.ic-hl { font: 600 11.500px "Open Sans", sans-serif; fill: #555; }
.ic-fc { font: bold 17px "Open Sans", sans-serif; fill: #444; }
.ic-num { font: bold 8px "Open Sans", sans-serif; fill: #3b78ba; }
.ic-az { font: 600 11.500px "Open Sans", sans-serif; fill: #3b78ba; }
.ic-az.z { fill: #8e55b0; }
.ic-rep { font: 600 10.500px "Open Sans", sans-serif; fill: #555; }

.gallery { width: 832px; height: 75px; background: #fff; border: 1px solid #c8c8c8; display: flex; padding-left: 1px; }
.style { width: 90px; height: 73px; padding: 9px 0 0 7px; color: #666; flex: none; }
.style.on { height: 70px; margin-top: 1px; padding: 3px 0 0 2px; border: 5px solid #cdccca; outline: 1px solid #8d8c88; outline-offset: -1px; }
.pv { width: 75px; height: 27px; overflow: hidden; font: 17.800px/28px "Liberation Sans", Arial, sans-serif; letter-spacing: .1px; color: #000; white-space: nowrap; padding-top: 3px; }
.pv.h1 { font-size: 37px; font-weight: bold; line-height: 27px; padding-top: 0; }
.pv.h2 { font-size: 28.500px; font-weight: bold; line-height: 30px; padding-top: 0; }
.pv.ti { font-size: 55px; font-weight: bold; line-height: 17px; padding: 0; }
.pv.su { font: italic 41px/25px "Liberation Serif", serif; color: #666; padding: 0; }
.pv.em { font-style: italic; }
.pv.subtle { color: #404040; }
.pv.intense { color: #4a80c0; }
.nm { width: 90px; margin-left: -7px; text-align: center; line-height: 20px; margin-top: 11px; white-space: nowrap; letter-spacing: -.15px; }
.scroller { width: 19px; height: 75px; margin: -1px -1px 0 auto; display: grid; grid-template-rows: 27px 24px 24px; border: 1px solid #c8c8c8; }
.scroller span { display: grid; place-items: center; border-bottom: 1px solid #c8c8c8; }
.scroller .dim { background: #e3e3e3; }
.edit-list { padding: 3px 0 0 13px; }
.edit-list div { display: flex; align-items: center; height: 29px; gap: 4px; line-height: 28px; }
.edit-list .c1 { margin-left: 9px; }
.edit-list .c2 { margin-left: -1px; }
.collapse { flex: 1; padding: 102px 0 0 48px; }

/* document */
.canvas { height: 797px; flex: none; padding-left: 454px; }
.page { width: 991px; height: 797px; background: #fff; border: solid #c6c6c6; border-width: 0 1px; }
.cut-line { height: 3px; padding-left: 141px; font: 14px/1 "Liberation Mono", monospace; color: #111; overflow: hidden; display: flex; align-items: flex-end; }
.app-title { margin: 59px 0 0 134px; width: 744px; height: 51px; border: 2px solid #c9cacb; border-radius: 5px; color: #212529; font-size: 28px; font-weight: 600; line-height: 49px; text-align: center; letter-spacing: -.8px; white-space: nowrap; }
.app-title i { font-style: normal; letter-spacing: -6.300px; margin-right: 2px; margin-left: -2px; }
.tools { display: flex; justify-content: space-between; align-items: flex-start; margin: 15px 90px 0 113px; }
.add { width: 98px; height: 35px; border-radius: 4px; background: #007bff; color: #fff; text-align: center; line-height: 35px; font-size: 14px; letter-spacing: -.15px; white-space: nowrap; }
.search { width: 383px; height: 27px; margin-top: 1px; border: 1px solid #dfe3e7; border-radius: 2px; padding-left: 8px; font-size: 11.300px; line-height: 26px; color: #858b91; letter-spacing: -.05px; }
.records { margin: 33px 0 0 102.500px; width: 806px; table-layout: fixed; border-collapse: collapse; font-size: 11.300px; letter-spacing: -.2px; color: #4b4f53; }
.k1 { width: 34px; } .k2 { width: 116px; } .k3 { width: 203px; } .k4 { width: 79px; } .k5 { width: 89px; } .k6 { width: 105px; } .k7 { width: 180px; }
.records thead tr { height: 37px; background: #212529; color: #fff; }
.records th, .records td { padding: 0; text-align: center; }
.records tbody tr { height: 44.700px; }
.records tbody th, .records tbody td { vertical-align: top; padding-top: 7px; line-height: 19px; height: 44.700px; border-top: 1px solid #e6e9ec; }
.records tbody th { color: #212529; }
.acts { display: flex; justify-content: center; gap: 3px; margin-top: 1px; }
.acts span { height: 27px; border-radius: 3px; background: #dc3545; color: #fff; line-height: 26px; width: 55px; }
.acts span + span { width: 51px; }

/* status bar */
.status { height: 27px; flex: none; background: #f3f3f3; border-top: 1px solid #c6c6c6; display: flex; justify-content: space-between; font-size: 12.500px; color: #444; letter-spacing: -.08px; }
.st-left { display: grid; grid-template-columns: 105px 91px 40px 106px 22px 200px; padding-left: 10px; align-items: center; white-space: nowrap; }
.pages { letter-spacing: .2px; }
.st-right { display: flex; align-items: center; width: 357px; }
.view-on { width: 50px; height: 26px; margin: 0 17px; background: #c6c6c6; display: grid; place-items: center; }
.zoom { margin: 0 16px 0 21px; }

/* taskbar */
.taskbar { height: 60px; flex: none; display: grid; grid-template-columns: 548px 825px 1fr; background: linear-gradient(90deg, #eeeaeb 0, #eeeaeb 190px, #dbe5ec 265px, #dbe5eb 450px, #dcebf0 560px, #d4e6ee 730px, #dce8ec 850px, #e1e8e9 950px, #dbe6ea 1010px, #e0dfde 1120px, #e2e1df 1350px, #eeebec 1500px, #eeeaeb 1800px, #f1e5e9 1850px, #f0e6ea 1920px); border-top: 1px solid #d5d9db; }
.weather { display: flex; gap: 12px; padding: 16px 0 0 27px; }
.weather div { display: flex; flex-direction: column; margin-top: -6px; line-height: 20px; letter-spacing: -.3px; }
.weather b { font-weight: 400; color: #1c1c1c; }
.weather span { color: #666; }
.apps { display: flex; margin-top: -1px; }
.apps svg { width: 55px; height: 60px; }
.run { fill: #8a8a8a; }
.badge { font: 600 28px "Open Sans", sans-serif; fill: #fbe; }
.wlogo { font: bold 32px "Open Sans", sans-serif; fill: #fff; }
.tray { display: flex; padding-left: 228px; color: #1c1c1c; letter-spacing: -.2px; }
.tray > svg { margin-top: 19px; }
.tray > svg:nth-of-type(2) { margin-left: 10px; }
.tray > svg:nth-of-type(4), .tray > svg:nth-of-type(5) { margin-left: 8px; }
.lang, .clock { display: flex; flex-direction: column; line-height: 20px; padding-top: 10px; }
.lang { width: 68px; align-items: center; padding-right: 4px; }
.clock { width: 96px; align-items: flex-end; padding-top: 9px; letter-spacing: .15px; }
```
